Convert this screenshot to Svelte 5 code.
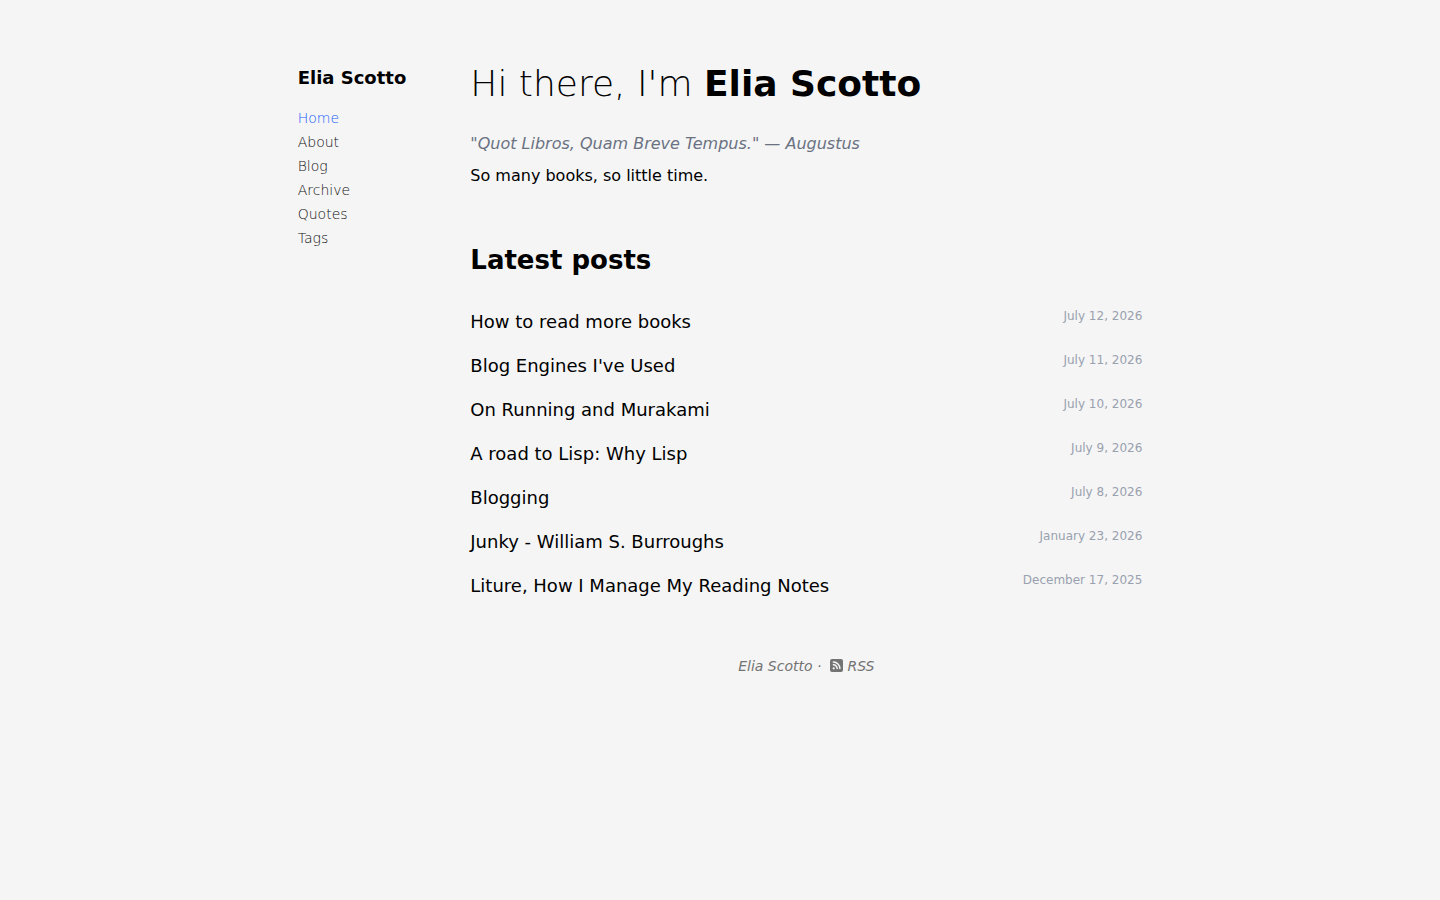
<script lang="ts">
  interface Post {
    title: string
    date: string
  }

  const nav = ['Home', 'About', 'Blog', 'Archive', 'Quotes', 'Tags']
  let current = $state('Home')

  const posts: Post[] = [
    { title: 'How to read more books', date: 'July 12, 2026' },
    { title: "Blog Engines I've Used", date: 'July 11, 2026' },
    { title: 'On Running and Murakami', date: 'July 10, 2026' },
    { title: 'A road to Lisp: Why Lisp', date: 'July 9, 2026' },
    { title: 'Blogging', date: 'July 8, 2026' },
    { title: 'Junky - William S. Burroughs', date: 'January 23, 2026' },
    { title: 'Liture, How I Manage My Reading Notes', date: 'December 17, 2025' },
  ]
</script>

<div class="layout">
  <aside>
    <a class="brand" href="#home">Elia Scotto</a>
    <nav>
      {#each nav as item}
        <a
          href="#{item.toLowerCase()}"
          class:active={item === current}
          onclick={() => (current = item)}>{item}</a>
      {/each}
    </nav>
  </aside>

  <div class="content">
    <main>
      <h1>Hi there, I'm <strong>Elia Scotto</strong></h1>
      <p class="quote">"Quot Libros, Quam Breve Tempus." — Augustus</p>
      <p>So many books, so little time.</p>

      <h2>Latest posts</h2>
      <ul>
        {#each posts as post}
          <li>
            <a href="#post">{post.title}</a>
            <time>{post.date}</time>
          </li>
        {/each}
      </ul>
    </main>

    <footer>
      <span>Elia Scotto ·</span>
      <a href="#rss">
        <svg viewBox="0 0 13 13" preserveAspectRatio="xMidYMin meet" aria-hidden="true">
          <rect width="13" height="13" rx="2" fill="currentColor" />
          <circle cx="3.7" cy="9.3" r="1.1" fill="#f5f5f5" />
          <path
            d="M3.4 5.8a3.8 3.8 0 0 1 3.8 3.8M3.4 3.1a6.5 6.5 0 0 1 6.5 6.5"
            fill="none"
            stroke="#f5f5f5"
            stroke-width="1.5"
            stroke-linecap="round"
          />
        </svg>
        RSS
      </a>
    </footer>
  </div>
</div>

<style>
  :global(body) {
    background: #f5f5f5;
    color: #000;
    font-family: 'DejaVu Sans', sans-serif;
    font-size: 16px;
    line-height: 24px;
  }

  a {
    color: inherit;
    text-decoration: none;
  }

  h1,
  h2,
  p,
  ul {
    margin: 0;
  }

  .layout {
    display: flex;
    gap: 64px;
    box-sizing: border-box;
    width: fit-content;
    max-width: 100%;
    margin: 0 auto;
    padding: 64px 24px;
  }

  aside {
    flex: none;
  }

  .brand {
    display: block;
    font-size: 18px;
    font-weight: 700;
    line-height: 28px;
  }

  nav {
    display: flex;
    flex-direction: column;
    margin-top: 14px;
    color: #111;
    font-size: 14px;
    font-weight: 200;
  }

  nav .active {
    color: #155dfc;
  }

  .content {
    width: 672px;
  }

  h1 {
    font-size: 36px;
    font-weight: 200;
    line-height: 40px;
  }

  h1 strong {
    font-weight: 700;
  }

  .quote {
    margin: 28px 0 8px;
    color: #6a7282;
    font-style: italic;
  }

  h2 {
    margin: 56px 0 32px;
    font-size: 26px;
    line-height: 32px;
  }

  ul {
    display: flex;
    flex-direction: column;
    gap: 16px;
    padding: 0;
    list-style: none;
  }

  li {
    display: flex;
    justify-content: space-between;
    font-size: 18px;
    line-height: 28px;
  }

  time {
    color: #99a1af;
    font-size: 12px;
    line-height: 16px;
  }

  footer {
    display: flex;
    justify-content: center;
    gap: 9px;
    margin-top: 54px;
    color: #737373;
    font-size: 14px;
    font-style: italic;
  }

  footer a {
    display: flex;
    align-items: center;
    gap: 4px;
  }

  footer svg {
    width: 13px;
    height: 14px;
  }
</style>
